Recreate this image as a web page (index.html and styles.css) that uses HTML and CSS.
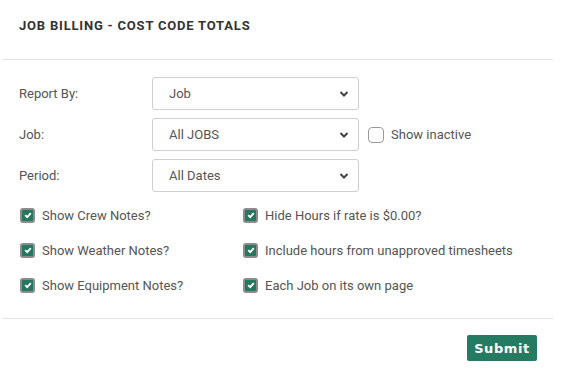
FILE: index.html
```html
<!DOCTYPE html>
<html lang="en">
<head>
  <meta charset="UTF-8">
  <title>Job Billing - Cost Code Totals</title>
  <link rel="stylesheet" href="styles.css">
</head>
<body>
  <div class="report-panel">
    <div class="panel-header">
      <h1>JOB BILLING - COST CODE TOTALS</h1>
    </div>

    <div class="panel-body">
      <div class="field-row">
        <label class="field-label">Report By:</label>
        <div class="select-box">
          <span>Job</span>
          <svg class="chevron" viewBox="0 0 10 6"><path d="M1.5 1l3.5 3.5 3.5-3.5"/></svg>
        </div>
      </div>
      <div class="field-row">
        <label class="field-label">Job:</label>
        <div class="select-box">
          <span>All JOBS</span>
          <svg class="chevron" viewBox="0 0 10 6"><path d="M1.5 1l3.5 3.5 3.5-3.5"/></svg>
        </div>
        <label class="inline-check">
          <span class="box-empty"></span>
          <span>Show inactive</span>
        </label>
      </div>
      <div class="field-row">
        <label class="field-label">Period:</label>
        <div class="select-box">
          <span>All Dates</span>
          <svg class="chevron" viewBox="0 0 10 6"><path d="M1.5 1l3.5 3.5 3.5-3.5"/></svg>
        </div>
      </div>

      <div class="option-grid">
        <label class="option"><span class="box-checked"><svg viewBox="0 0 10 10"><path d="M2.2 5.2l2 2 3.6-4"/></svg></span>Show Crew Notes?</label>
        <label class="option"><span class="box-checked"><svg viewBox="0 0 10 10"><path d="M2.2 5.2l2 2 3.6-4"/></svg></span>Hide Hours if rate is $0.00?</label>
        <label class="option"><span class="box-checked"><svg viewBox="0 0 10 10"><path d="M2.2 5.2l2 2 3.6-4"/></svg></span>Show Weather Notes?</label>
        <label class="option"><span class="box-checked"><svg viewBox="0 0 10 10"><path d="M2.2 5.2l2 2 3.6-4"/></svg></span>Include hours from unapproved timesheets</label>
        <label class="option"><span class="box-checked"><svg viewBox="0 0 10 10"><path d="M2.2 5.2l2 2 3.6-4"/></svg></span>Show Equipment Notes?</label>
        <label class="option"><span class="box-checked"><svg viewBox="0 0 10 10"><path d="M2.2 5.2l2 2 3.6-4"/></svg></span>Each Job on its own page</label>
      </div>
    </div>

    <div class="panel-footer">
      <button class="submit-button">Submit</button>
    </div>
  </div>
</body>
</html>
```

FILE: styles.css
```css
* {
  margin: 0;
  padding: 0;
  box-sizing: border-box;
}

body {
  font-family: Roboto, "Liberation Sans", sans-serif;
  background-color: white;
  color: #555;
  font-size: 13px;
}

.report-panel {
  width: 550px;
  margin-left: 3px;
}

.panel-header {
  height: 60px;
  padding: 18px 16px 0;
  border-bottom: 1px solid #e2e2e2;
}

h1 {
  font-size: 13px;
  font-weight: 700;
  letter-spacing: 0.8px;
  color: #333;
}

.panel-body {
  padding: 17px 16px 23px;
}

.field-row {
  display: flex;
  align-items: center;
  margin-bottom: 8px;
}

.field-label {
  width: 133px;
}

.select-box {
  width: 207px;
  height: 33px;
  border: 1px solid #cfcfcf;
  border-radius: 3px;
  display: flex;
  align-items: center;
  justify-content: space-between;
  padding: 0 9px 0 16px;
}

.chevron {
  width: 10px;
  height: 6px;
  fill: none;
  stroke: #444;
  stroke-width: 2;
}

.inline-check {
  display: flex;
  align-items: center;
  margin-left: 9px;
}

.box-empty {
  width: 16px;
  height: 16px;
  border: 1px solid #999;
  border-radius: 4px;
  margin-right: 7px;
}

.option-grid {
  display: grid;
  grid-template-columns: 223px 1fr;
  row-gap: 15px;
  margin-top: 13px;
}

.option {
  display: flex;
  align-items: center;
  height: 20px;
}

.box-checked {
  width: 15px;
  height: 15px;
  border: 2px solid #8c8c8c;
  border-radius: 3px;
  background-color: #27765f;
  margin: 0 7px 0 1px;
  display: flex;
  align-items: center;
  justify-content: center;
}

.box-checked svg {
  width: 10px;
  height: 10px;
  fill: none;
  stroke: white;
  stroke-width: 1.8;
}

.panel-footer {
  border-top: 1px solid #e2e2e2;
  padding: 16px 16px 0;
  display: flex;
  justify-content: flex-end;
}

.submit-button {
  background-color: #257a62;
  color: white;
  border: none;
  border-radius: 2px;
  width: 70px;
  height: 26px;
  font-family: "DejaVu Sans", sans-serif;
  font-size: 13px;
  font-weight: 700;
  letter-spacing: 0.6px;
}
```
